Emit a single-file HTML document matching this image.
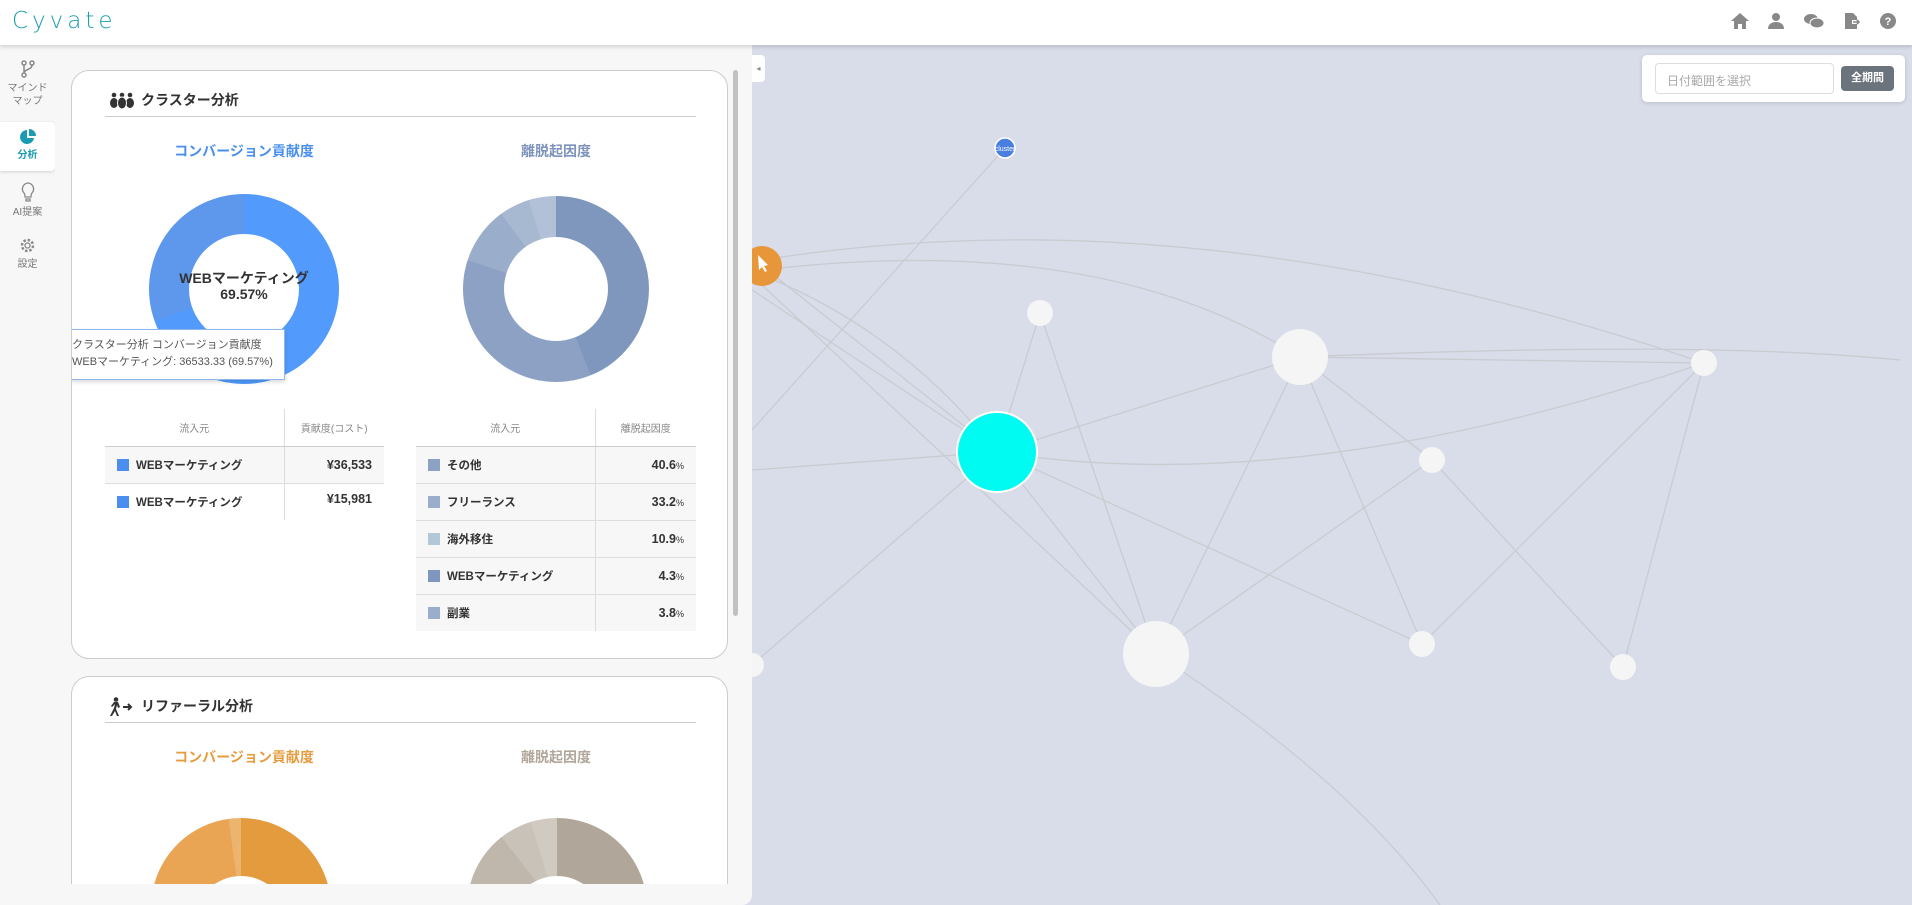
<!DOCTYPE html>
<html><head><meta charset="utf-8"><style>
*{box-sizing:border-box;margin:0;padding:0}
html,body{width:1912px;height:905px;overflow:hidden}
body{background:#d8dde9;font-family:"Liberation Sans","Noto Sans CJK JP",sans-serif;position:relative;color:#333}
.hdr{position:absolute;left:0;top:0;width:1912px;height:45px;background:#fff;box-shadow:0 2px 4px rgba(0,0,0,.15);z-index:5}
.logo{position:absolute;left:12px;top:8px;font-size:23px;letter-spacing:4px;color:#1a9bb0;font-family:"DejaVu Sans",sans-serif;font-weight:300}
.hic{position:absolute;top:12px}
.side{position:absolute;left:0;top:45px;width:55px;height:860px;background:#f7f7f7}
.si{position:absolute;left:0;width:55px;text-align:center;font-size:10px;color:#777;line-height:13px}
.panel{position:absolute;left:55px;top:45px;width:697px;height:860px;background:#f7f7f7;border-bottom-right-radius:10px;overflow:hidden}
.card{position:absolute;left:16px;width:657px;background:#fff;border:1px solid #ccc;border-radius:18px;overflow:hidden}
.ttl{position:absolute;left:33px;width:591px;border-bottom:1px solid #ccc;height:30px;font-size:14px;font-weight:bold;color:#333;padding-left:36px;line-height:26px}
.ct{position:absolute;font-size:14px;font-weight:bold;text-align:center;width:240px}
.donut{position:absolute;border-radius:50%}
.donut .h{position:absolute;background:#fff;border-radius:50%}
table{position:absolute;border-collapse:collapse;font-size:11.5px}
th{font-weight:normal;color:#888;font-size:10px;height:37px;border-bottom:1.5px solid #ccc}
td{height:37px;border-bottom:1px solid #ddd;font-weight:bold;color:#333}
tr.g td{background:#f7f7f7}
.sq{display:inline-block;width:12px;height:12px;vertical-align:-2px;margin:0 7px 0 12px}
.pc{font-size:9px;font-weight:normal}
</style></head><body>
<div class="hdr"><div class="logo">Cyvate</div>
<svg class="hic" style="left:1730px" width="20" height="18" viewBox="0 0 20 18"><path d="M10 1L1 9h3v8h4v-5h4v5h4V9h3z" fill="#888"/></svg>
<svg class="hic" style="left:1767px" width="18" height="18" viewBox="0 0 18 18"><circle cx="9" cy="5" r="4" fill="#888"/><path d="M1 17c0-5 4-7 8-7s8 2 8 7z" fill="#888"/></svg>
<svg class="hic" style="left:1803px" width="22" height="18" viewBox="0 0 22 18"><ellipse cx="8" cy="7" rx="7" ry="5" fill="#888"/><ellipse cx="14" cy="11" rx="7" ry="5" fill="#888" stroke="#fff" stroke-width="1"/></svg>
<svg class="hic" style="left:1843px" width="18" height="18" viewBox="0 0 18 18"><path d="M2 1h8l4 4v3H9v4h5v5H2z" fill="#888"/><path d="M10 10h6M14 8l2 2-2 2" stroke="#888" stroke-width="1.6" fill="none"/></svg>
<svg class="hic" style="left:1879px" width="18" height="18" viewBox="0 0 18 18"><circle cx="9" cy="9" r="8" fill="#888"/><text x="9" y="13" font-size="11" font-weight="bold" fill="#fff" text-anchor="middle" font-family="Liberation Sans">?</text></svg>
</div>

<svg style="position:absolute;left:0;top:0" width="1912" height="905">
<g stroke="#c9cbd0" stroke-width="1.3" fill="none">
<path d="M762 266 L997 452"/><path d="M762 275 Q900 330 997 452"/><path d="M762 285 L1156 654"/><path d="M752 290 L997 452"/>
<path d="M762 260 Q1200 190 1704 363"/><path d="M762 270 Q1100 230 1300 357"/>
<path d="M752 430 L1005 148"/><path d="M752 470 L997 452"/>
<path d="M997 452 L1300 357"/><path d="M997 452 L1156 654"/><path d="M997 452 L1040 313"/><path d="M997 452 L1422 644"/>
<path d="M997 452 Q1300 500 1704 363"/><path d="M1040 313 L1156 654"/>
<path d="M1300 357 L1156 654"/><path d="M1300 357 L1432 460"/><path d="M1300 357 L1422 644"/><path d="M1300 357 L1704 363"/>
<path d="M1156 654 L1432 460"/><path d="M1432 460 L1623 667"/><path d="M1422 644 L1704 363"/><path d="M1623 667 L1704 363"/>
<path d="M1156 654 Q1350 780 1440 905"/><path d="M752 665 L997 452"/><path d="M1300 357 Q1700 340 1900 360"/>
</g>
<circle cx="997" cy="452" r="40" fill="#00fbf3" stroke="#fff" stroke-width="2"/>
<g fill="#f5f5f5"><circle cx="1300" cy="357" r="28"/><circle cx="1156" cy="654" r="33"/><circle cx="1040" cy="313" r="13"/><circle cx="1704" cy="363" r="13"/><circle cx="1432" cy="460" r="13"/><circle cx="1422" cy="644" r="13"/><circle cx="1623" cy="667" r="13"/><circle cx="752" cy="665" r="12"/></g>
<circle cx="762" cy="266" r="20" fill="#e8963a"/>
<path d="M758 255l10 10-4 1 3 5-2 1-3-5-3 3z" fill="#fff"/>
<circle cx="1005" cy="148" r="10" fill="#4a7fe0" stroke="#fff" stroke-width="1.5"/>
<text x="1005" y="151" font-size="7" fill="#fff" text-anchor="middle" font-family="Liberation Sans">cluster</text>
</svg>

<div style="position:absolute;left:1642px;top:55px;width:263px;height:47px;background:#fff;border-radius:5px;box-shadow:0 1px 4px rgba(0,0,0,.15)">
<div style="position:absolute;left:13px;top:8px;width:179px;height:31px;border:1px solid #ddd;border-radius:4px;font-size:12px;color:#aaa;padding:8px 11px">日付範囲を選択</div>
<div style="position:absolute;left:199px;top:11px;width:53px;height:25px;background:#6b737d;border-radius:4px;color:#fff;font-size:11px;font-weight:bold;text-align:center;line-height:25px">全期間</div>
</div>

<div class="side">
<div class="si" style="top:15px"><svg width="16" height="18" viewBox="0 0 16 18"><g stroke="#888" stroke-width="1.5" fill="none"><circle cx="4" cy="3" r="2"/><circle cx="12" cy="3" r="2"/><circle cx="4" cy="15" r="2"/><path d="M4 5v8M12 5c0 5-8 4-8 8"/></g></svg><br>マインド<br>マップ</div>
<div class="si" style="top:77px;height:49px;background:#fff;box-shadow:0 1px 3px rgba(0,0,0,.15);border-radius:0 4px 4px 0;padding-top:7px;color:#1a9bb0;font-weight:bold"><svg width="16" height="16" viewBox="0 0 16 16"><path d="M7 1a7 7 0 1 0 7 8H7z" fill="#1a9bb0"/><path d="M9 0v7h7a7 7 0 0 0-7-7z" fill="#1a9bb0"/></svg><br>分析</div>
<div class="si" style="top:137px"><svg width="14" height="20" viewBox="0 0 14 20"><path d="M7 1a6 6 0 0 0-4 10c1 1 1 3 1 4h6c0-1 0-3 1-4A6 6 0 0 0 7 1zM5 17h4v2H5z" stroke="#888" stroke-width="1.3" fill="none"/></svg><br>AI提案</div>
<div class="si" style="top:192px"><svg width="17" height="17" viewBox="0 0 17 17"><circle cx="8.5" cy="8.5" r="5.5" stroke="#888" stroke-width="2.5" fill="none" stroke-dasharray="2.5 1.8"/><circle cx="8.5" cy="8.5" r="2.5" stroke="#888" stroke-width="1.3" fill="none"/></svg><br>設定</div>
</div>

<div class="panel">
<div class="card" style="top:25px;height:589px">
 <div class="ttl" style="top:16px"><svg style="position:absolute;left:4px;top:5px" width="26" height="18" viewBox="0 0 26 18"><g fill="#333"><circle cx="5" cy="3" r="2.3"/><circle cx="13" cy="3" r="2.3"/><circle cx="21" cy="3" r="2.3"/><ellipse cx="5" cy="11" rx="4" ry="5"/><ellipse cx="21" cy="11" rx="4" ry="5"/><ellipse cx="13" cy="11" rx="4.5" ry="6" stroke="#fff"/></g></svg>クラスター分析</div>
 <div class="ct" style="left:52px;top:70px;color:#4a8ff0">コンバージョン貢献度</div>
 <div class="ct" style="left:364px;top:70px;color:#7d93bd">離脱起因度</div>
 <div class="donut" style="left:77px;top:123px;width:190px;height:190px;background:conic-gradient(#529bfd 0 250deg,#5e98ec 250deg 360deg)"><div class="h" style="left:40px;top:40px;width:110px;height:110px"></div></div>
 <div style="position:absolute;left:52px;top:199px;width:240px;text-align:center;font-size:14px;font-weight:bold;line-height:16px">WEBマーケティング<br>69.57%</div>
 <div class="donut" style="left:391px;top:125px;width:186px;height:186px;background:conic-gradient(#7f96bd 0 158deg,#8ca1c4 158deg 288deg,#9aadcb 288deg 324deg,#a7b8d1 324deg 343deg,#b2c1d7 343deg 360deg)"><div class="h" style="left:41px;top:41px;width:104px;height:104px"></div></div>
 <div style="position:absolute;left:-1px;top:258px;width:214px;height:51px;background:#fff;border:1px solid #8fb6ee;box-shadow:0 2px 4px rgba(0,0,0,.15);font-size:11px;color:#555;line-height:17px;padding:7px 0 0 0;white-space:nowrap">クラスター分析 コンバージョン貢献度<br>WEBマーケティング: 36533.33 (69.57%)</div>
 <table style="left:33px;top:338px;width:279px">
  <tr><th style="width:179px">流入元</th><th style="border-left:1px solid #ddd">貢献度(コスト)</th></tr>
  <tr class="g"><td><span class="sq" style="background:#4a8ff0"></span>WEBマーケティング</td><td style="border-left:1px solid #ddd;text-align:right;padding-right:12px;font-size:12.5px">¥36,533</td></tr>
  <tr><td style="border:none"><span class="sq" style="background:#4a8ff0"></span>WEBマーケティング</td><td style="border-left:1px solid #ddd;border-bottom:none;text-align:right;padding-right:12px;font-size:12.5px;vertical-align:top;padding-top:8px">¥15,981</td></tr>
 </table>
 <table style="left:344px;top:338px;width:280px">
  <tr><th style="width:179px">流入元</th><th style="border-left:1px solid #ddd">離脱起因度</th></tr>
  <tr class="g"><td><span class="sq" style="background:#8ca1c4"></span>その他</td><td style="border-left:1px solid #ddd;text-align:right;padding-right:12px;font-size:12.5px">40.6<span class="pc">%</span></td></tr>
  <tr class="g"><td><span class="sq" style="background:#9aadcb"></span>フリーランス</td><td style="border-left:1px solid #ddd;text-align:right;padding-right:12px;font-size:12.5px">33.2<span class="pc">%</span></td></tr>
  <tr class="g"><td><span class="sq" style="background:#b2c8d6"></span>海外移住</td><td style="border-left:1px solid #ddd;text-align:right;padding-right:12px;font-size:12.5px">10.9<span class="pc">%</span></td></tr>
  <tr class="g"><td><span class="sq" style="background:#7f96bd"></span>WEBマーケティング</td><td style="border-left:1px solid #ddd;text-align:right;padding-right:12px;font-size:12.5px">4.3<span class="pc">%</span></td></tr>
  <tr class="g"><td style="border:none"><span class="sq" style="background:#9aadcb"></span>副業</td><td style="border-left:1px solid #ddd;border-bottom:none;text-align:right;padding-right:12px;font-size:12.5px">3.8<span class="pc">%</span></td></tr>
 </table>
</div>
<div class="card" style="top:631px;height:208px;border-bottom:none;border-radius:18px 18px 0 0">
 <div class="ttl" style="top:16px"><svg style="position:absolute;left:4px;top:4px" width="26" height="20" viewBox="0 0 26 20"><g fill="#333"><circle cx="7" cy="2.5" r="2.3"/><path d="M5 5h4l2 5-2 1-1-3-1 4 3 7H8l-2-5-3 5H1l4-8 1-4-3 3-1-1z"/><path d="M14 10h8M19 7l3 3-3 3" stroke="#333" stroke-width="2" fill="none"/></g></svg>リファーラル分析</div>
 <div class="ct" style="left:52px;top:70px;color:#e59c3f">コンバージョン貢献度</div>
 <div class="ct" style="left:364px;top:70px;color:#b0a699">離脱起因度</div>
 <div class="donut" style="left:79px;top:141px;width:180px;height:180px;background:conic-gradient(#e49b3e 0 180deg,#e9a554 180deg 352deg,#ecb56f 352deg 360deg)"><div class="h" style="left:43px;top:58px;width:94px;height:94px"></div></div>
 <div class="donut" style="left:395px;top:141px;width:180px;height:180px;background:conic-gradient(#b0a699 0 180deg,#bfb7ab 180deg 322deg,#c9c2b8 322deg 343deg,#d0cac1 343deg 360deg)"><div class="h" style="left:43px;top:58px;width:94px;height:94px"></div></div>
</div>
<div style="position:absolute;left:678px;top:25px;width:5px;height:546px;background:#c1c1c1;border-radius:3px"></div>
</div>
<div style="position:absolute;left:752px;top:55px;width:13px;height:27px;background:#fff;border-radius:0 4px 4px 0;font-size:8px;color:#888;text-align:center;line-height:27px">◂</div>
</body></html>
